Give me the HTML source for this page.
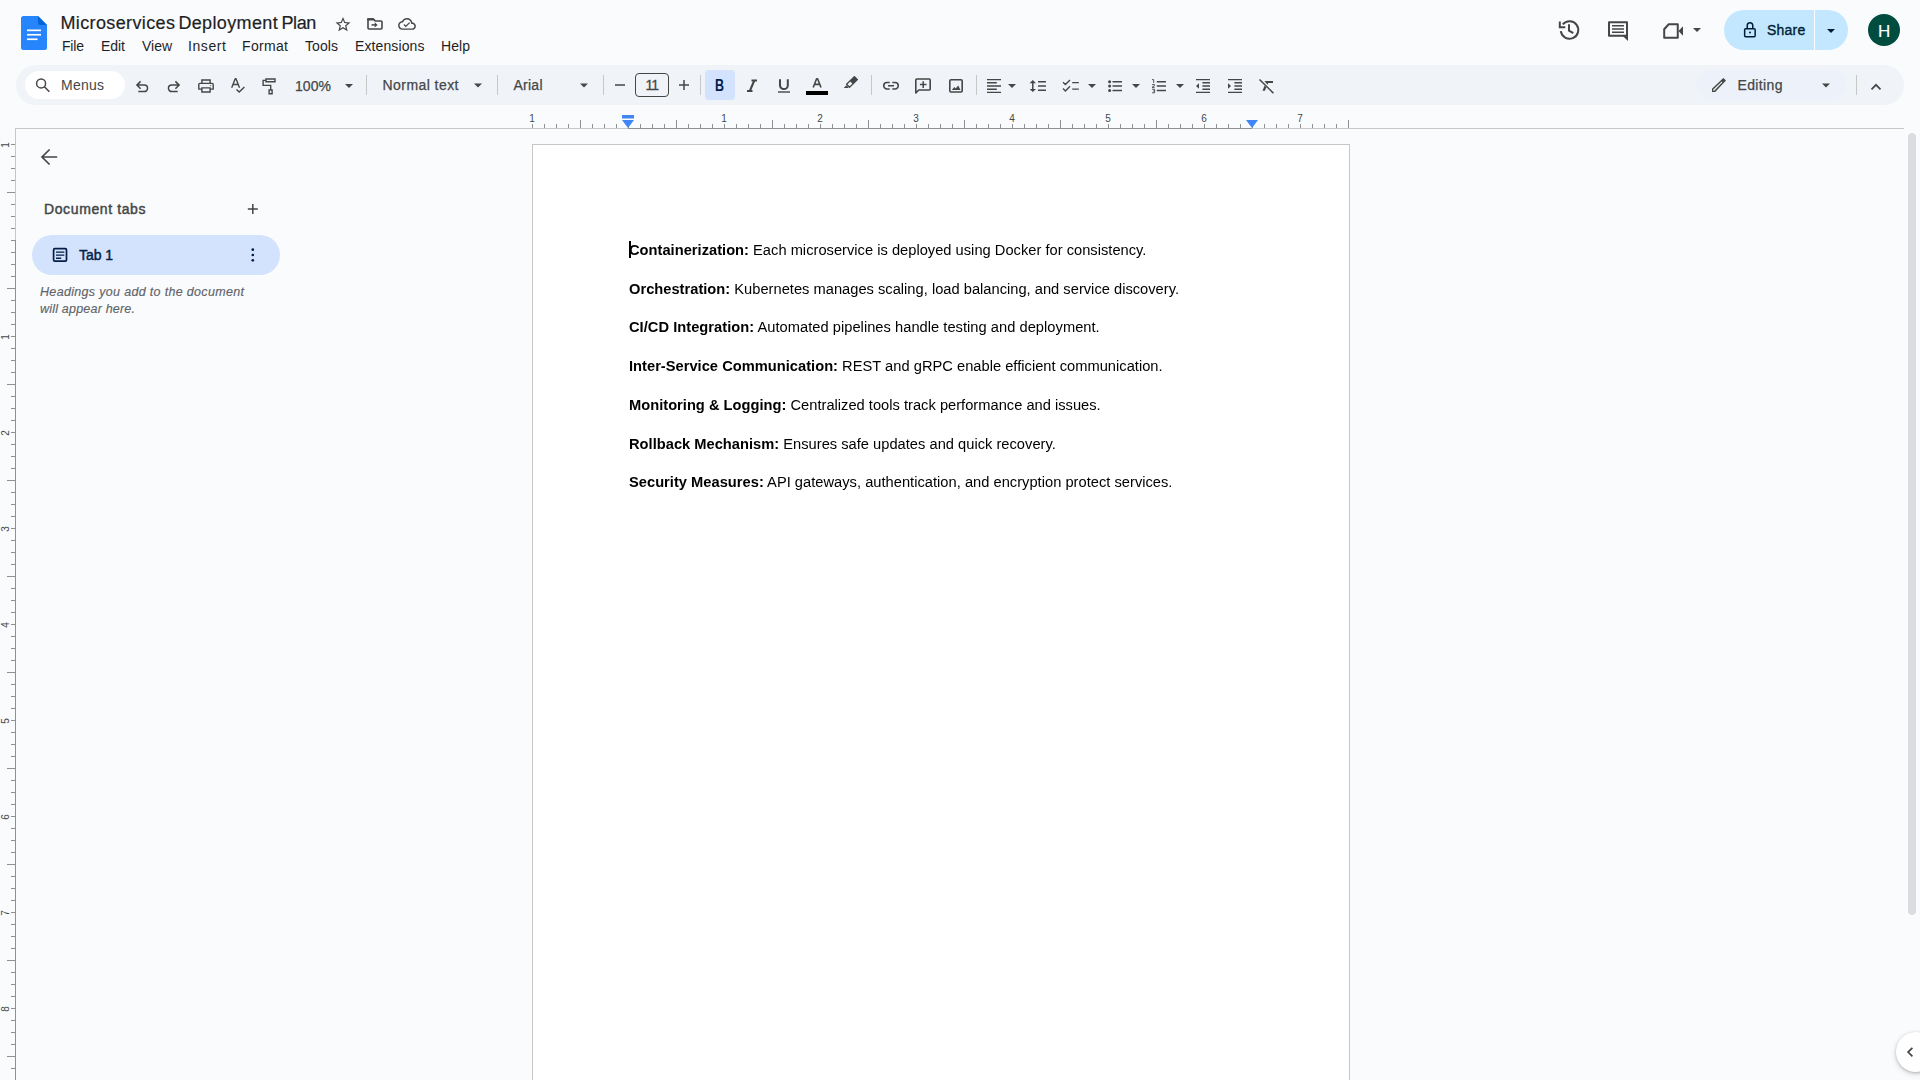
<!DOCTYPE html>
<html lang="en"><head><meta charset="utf-8"><title>Microservices Deployment Plan - Google Docs</title>
<style>
html,body{margin:0;padding:0;}
body{width:1920px;height:1080px;overflow:hidden;background:#f9fbfd;position:relative;font-family:"Liberation Sans",Arial,sans-serif;}
.t{position:absolute;white-space:pre;line-height:20px;}
.abs{position:absolute;}
svg{position:absolute;overflow:visible;}
.sep{position:absolute;width:1px;background:#c7c7c7;top:75px;height:20px;}
</style></head><body>

<svg style="left:21px;top:16px" width="26" height="34" viewBox="0 0 26 34">
<path d="M2.5 0H17L26 9V31.5A2.5 2.5 0 0 1 23.5 34H2.5A2.5 2.5 0 0 1 0 31.5V2.500A2.5 2.5 0 0 1 2.500 0Z" fill="#2684fc"/>
<path d="M17 0L26 9H19.500A2.500 2.500 0 0 1 17 6.500Z" fill="#0066da"/>
<rect x="6" y="13.500" width="14" height="1.700" fill="#fff"/><rect x="6" y="17.900" width="14" height="1.700" fill="#fff"/><rect x="6" y="22.400" width="10.500" height="1.700" fill="#fff"/>
</svg>
<span class="t" id="title" style="left:60.4px;top:12.76px;font-size:18px;font-weight:400;color:#1f1f1f;letter-spacing:0.382px;-webkit-text-stroke:0.2px;">Microservices</span>
<span class="t" id="title2" style="left:178.4px;top:12.76px;font-size:18px;font-weight:400;color:#1f1f1f;letter-spacing:0.361px;-webkit-text-stroke:0.2px;">Deployment</span>
<span class="t" id="title3" style="left:281.5px;top:12.76px;font-size:18px;font-weight:400;color:#1f1f1f;letter-spacing:-0.410px;-webkit-text-stroke:0.2px;">Plan</span>
<span class="t" id="m0" style="left:62px;top:36.15px;font-size:14px;font-weight:400;color:#1f1f1f;letter-spacing:-0.188px;">File</span>
<span class="t" id="m1" style="left:101px;top:36.15px;font-size:14px;font-weight:400;color:#1f1f1f;letter-spacing:-0.044px;">Edit</span>
<span class="t" id="m2" style="left:142px;top:36.15px;font-size:14px;font-weight:400;color:#1f1f1f;letter-spacing:-0.031px;">View</span>
<span class="t" id="m3" style="left:188px;top:36.15px;font-size:14px;font-weight:400;color:#1f1f1f;letter-spacing:0.595px;">Insert</span>
<span class="t" id="m4" style="left:242px;top:36.15px;font-size:14px;font-weight:400;color:#1f1f1f;letter-spacing:0.333px;">Format</span>
<span class="t" id="m5" style="left:305px;top:36.15px;font-size:14px;font-weight:400;color:#1f1f1f;letter-spacing:0.078px;">Tools</span>
<span class="t" id="m6" style="left:355px;top:36.15px;font-size:14px;font-weight:400;color:#1f1f1f;letter-spacing:0.112px;">Extensions</span>
<span class="t" id="m7" style="left:441px;top:36.15px;font-size:14px;font-weight:400;color:#1f1f1f;letter-spacing:0.066px;">Help</span>
<div class="abs" style="left:16px;top:65px;width:1888px;height:40px;border-radius:20px;background:#f0f4f9"></div>
<div class="abs" style="left:25px;top:71px;width:100px;height:28px;border-radius:14px;background:#fff"></div>
<span class="t" id="menus" style="left:61px;top:75.15px;font-size:14px;font-weight:400;color:#444746;letter-spacing:0.241px;">Menus</span>
<div class="sep" style="left:366px"></div>
<div class="sep" style="left:497px"></div>
<div class="sep" style="left:603px"></div>
<div class="sep" style="left:700px"></div>
<div class="sep" style="left:871px"></div>
<div class="sep" style="left:976px"></div>
<div class="sep" style="left:1856px"></div>
<span class="t" id="zoom" style="left:295px;top:75.65px;font-size:14px;font-weight:400;color:#444746;letter-spacing:0.062px;-webkit-text-stroke:0.25px;">100%</span>
<span class="t" id="ntext" style="left:382.5px;top:75.15px;font-size:14px;font-weight:400;color:#444746;letter-spacing:0.442px;-webkit-text-stroke:0.25px;">Normal text</span>
<span class="t" id="arial" style="left:513.5px;top:75.15px;font-size:14px;font-weight:400;color:#444746;letter-spacing:0.247px;-webkit-text-stroke:0.25px;">Arial</span>
<div class="abs" style="left:635px;top:73px;width:32px;height:22px;border:1px solid #444746;border-radius:4px"></div>
<span class="t" id="fs11" style="left:645.4px;top:75.15px;font-size:14px;font-weight:400;color:#444746;letter-spacing:-1.547px;letter-spacing:-0.9px;-webkit-text-stroke:0.3px;">11</span>
<div class="abs" style="left:705px;top:70px;width:30px;height:30px;border-radius:4px;background:#d3e3fd"></div>
<div class="abs" style="left:1696px;top:70px;width:151px;height:30px;border-radius:15px;background:#edf2fa"></div>
<span class="t" id="editing" style="left:1737.5px;top:75.15px;font-size:14px;font-weight:400;color:#444746;letter-spacing:0.364px;-webkit-text-stroke:0.25px;">Editing</span>
<div class="abs" style="left:1724px;top:10px;width:124px;height:40px;border-radius:20px;background:#c2e7ff"></div>
<div class="abs" style="left:1814px;top:10px;width:1px;height:40px;background:#f9fbfd"></div>
<span class="t" id="share" style="left:1767px;top:19.85px;font-size:14px;font-weight:400;color:#001d35;letter-spacing:0.232px;-webkit-text-stroke:0.35px #001d35;">Share</span>
<div class="abs" style="left:1868px;top:14px;width:32px;height:32px;border-radius:16px;background:#004d40"></div>
<span class="t" id="avH" style="left:1878px;top:21.71px;font-size:17px;font-weight:400;color:#fff;letter-spacing:0.000px;-webkit-text-stroke:0.15px;">H</span>
<span class="t" id="boldB" style="left:715px;top:75.66px;font-size:16px;font-weight:700;color:#041e49;letter-spacing:0.000px;transform:scaleX(0.78);transform-origin:0 50%;">B</span>
<div class="abs" style="left:16px;top:128px;width:1888px;height:1px;background:#c7c7c7"></div>
<div class="abs" style="left:15px;top:128px;width:1px;height:952px;background:#c7c7c7"></div>
<div class="abs" style="left:532px;top:144px;width:816px;height:940px;background:#fff;border:1px solid #c7c7c7"></div>
<div class="abs" style="left:1908px;top:133px;width:8px;height:782px;border-radius:4px;background:#dadce0"></div>
<div class="abs" style="left:1896px;top:1032px;width:40px;height:40px;border-radius:20px;background:#fff;box-shadow:0 1px 3px rgba(60,64,67,.3),0 2px 6px rgba(60,64,67,.15)"></div>
<span class="t" id="dtabs" style="left:44px;top:199.15px;font-size:14px;font-weight:400;color:#444746;letter-spacing:0.611px;-webkit-text-stroke:0.45px;">Document tabs</span>
<div class="abs" style="left:32px;top:235px;width:248px;height:40px;border-radius:20px;background:#d3e3fd"></div>
<span class="t" id="tab1" style="left:79px;top:245.15px;font-size:14px;font-weight:400;color:#041e49;letter-spacing:-0.063px;-webkit-text-stroke:0.45px;">Tab 1</span>
<span class="t" id="hd1" style="left:40px;top:281.67px;font-size:12.5px;font-weight:400;color:#5f6368;letter-spacing:0.326px;font-style:italic;-webkit-text-stroke:0.15px;">Headings you add to the document</span>
<span class="t" id="hd2" style="left:40px;top:298.67px;font-size:12.5px;font-weight:400;color:#5f6368;letter-spacing:0.205px;font-style:italic;-webkit-text-stroke:0.15px;">will appear here.</span>
<svg style="left:0;top:0" width="1920" height="1080" viewBox="0 0 1920 1080" shape-rendering="crispEdges">
<rect x="628" y="128" width="624" height="1" fill="#8e918f"/>
<rect x="532" y="124" width="1" height="4" fill="#8e918f"/>
<rect x="544" y="124" width="1" height="4" fill="#8e918f"/>
<rect x="556" y="124" width="1" height="4" fill="#8e918f"/>
<rect x="568" y="124" width="1" height="4" fill="#8e918f"/>
<rect x="580" y="120" width="1" height="8" fill="#8e918f"/>
<rect x="592" y="124" width="1" height="4" fill="#8e918f"/>
<rect x="604" y="124" width="1" height="4" fill="#8e918f"/>
<rect x="616" y="124" width="1" height="4" fill="#8e918f"/>
<rect x="628" y="124" width="1" height="4" fill="#8e918f"/>
<rect x="640" y="124" width="1" height="4" fill="#8e918f"/>
<rect x="652" y="124" width="1" height="4" fill="#8e918f"/>
<rect x="664" y="124" width="1" height="4" fill="#8e918f"/>
<rect x="676" y="120" width="1" height="8" fill="#8e918f"/>
<rect x="688" y="124" width="1" height="4" fill="#8e918f"/>
<rect x="700" y="124" width="1" height="4" fill="#8e918f"/>
<rect x="712" y="124" width="1" height="4" fill="#8e918f"/>
<rect x="724" y="124" width="1" height="4" fill="#8e918f"/>
<rect x="736" y="124" width="1" height="4" fill="#8e918f"/>
<rect x="748" y="124" width="1" height="4" fill="#8e918f"/>
<rect x="760" y="124" width="1" height="4" fill="#8e918f"/>
<rect x="772" y="120" width="1" height="8" fill="#8e918f"/>
<rect x="784" y="124" width="1" height="4" fill="#8e918f"/>
<rect x="796" y="124" width="1" height="4" fill="#8e918f"/>
<rect x="808" y="124" width="1" height="4" fill="#8e918f"/>
<rect x="820" y="124" width="1" height="4" fill="#8e918f"/>
<rect x="832" y="124" width="1" height="4" fill="#8e918f"/>
<rect x="844" y="124" width="1" height="4" fill="#8e918f"/>
<rect x="856" y="124" width="1" height="4" fill="#8e918f"/>
<rect x="868" y="120" width="1" height="8" fill="#8e918f"/>
<rect x="880" y="124" width="1" height="4" fill="#8e918f"/>
<rect x="892" y="124" width="1" height="4" fill="#8e918f"/>
<rect x="904" y="124" width="1" height="4" fill="#8e918f"/>
<rect x="916" y="124" width="1" height="4" fill="#8e918f"/>
<rect x="928" y="124" width="1" height="4" fill="#8e918f"/>
<rect x="940" y="124" width="1" height="4" fill="#8e918f"/>
<rect x="952" y="124" width="1" height="4" fill="#8e918f"/>
<rect x="964" y="120" width="1" height="8" fill="#8e918f"/>
<rect x="976" y="124" width="1" height="4" fill="#8e918f"/>
<rect x="988" y="124" width="1" height="4" fill="#8e918f"/>
<rect x="1000" y="124" width="1" height="4" fill="#8e918f"/>
<rect x="1012" y="124" width="1" height="4" fill="#8e918f"/>
<rect x="1024" y="124" width="1" height="4" fill="#8e918f"/>
<rect x="1036" y="124" width="1" height="4" fill="#8e918f"/>
<rect x="1048" y="124" width="1" height="4" fill="#8e918f"/>
<rect x="1060" y="120" width="1" height="8" fill="#8e918f"/>
<rect x="1072" y="124" width="1" height="4" fill="#8e918f"/>
<rect x="1084" y="124" width="1" height="4" fill="#8e918f"/>
<rect x="1096" y="124" width="1" height="4" fill="#8e918f"/>
<rect x="1108" y="124" width="1" height="4" fill="#8e918f"/>
<rect x="1120" y="124" width="1" height="4" fill="#8e918f"/>
<rect x="1132" y="124" width="1" height="4" fill="#8e918f"/>
<rect x="1144" y="124" width="1" height="4" fill="#8e918f"/>
<rect x="1156" y="120" width="1" height="8" fill="#8e918f"/>
<rect x="1168" y="124" width="1" height="4" fill="#8e918f"/>
<rect x="1180" y="124" width="1" height="4" fill="#8e918f"/>
<rect x="1192" y="124" width="1" height="4" fill="#8e918f"/>
<rect x="1204" y="124" width="1" height="4" fill="#8e918f"/>
<rect x="1216" y="124" width="1" height="4" fill="#8e918f"/>
<rect x="1228" y="124" width="1" height="4" fill="#8e918f"/>
<rect x="1240" y="124" width="1" height="4" fill="#8e918f"/>
<rect x="1252" y="120" width="1" height="8" fill="#8e918f"/>
<rect x="1264" y="124" width="1" height="4" fill="#8e918f"/>
<rect x="1276" y="124" width="1" height="4" fill="#8e918f"/>
<rect x="1288" y="124" width="1" height="4" fill="#8e918f"/>
<rect x="1300" y="124" width="1" height="4" fill="#8e918f"/>
<rect x="1312" y="124" width="1" height="4" fill="#8e918f"/>
<rect x="1324" y="124" width="1" height="4" fill="#8e918f"/>
<rect x="1336" y="124" width="1" height="4" fill="#8e918f"/>
<rect x="1348" y="120" width="1" height="8" fill="#8e918f"/>
<rect x="15" y="240" width="1" height="840" fill="#8e918f"/>
<rect x="11" y="144" width="4" height="1" fill="#8e918f"/>
<rect x="11" y="156" width="4" height="1" fill="#8e918f"/>
<rect x="11" y="168" width="4" height="1" fill="#8e918f"/>
<rect x="11" y="180" width="4" height="1" fill="#8e918f"/>
<rect x="7" y="192" width="8" height="1" fill="#8e918f"/>
<rect x="11" y="204" width="4" height="1" fill="#8e918f"/>
<rect x="11" y="216" width="4" height="1" fill="#8e918f"/>
<rect x="11" y="228" width="4" height="1" fill="#8e918f"/>
<rect x="11" y="240" width="4" height="1" fill="#8e918f"/>
<rect x="11" y="252" width="4" height="1" fill="#8e918f"/>
<rect x="11" y="264" width="4" height="1" fill="#8e918f"/>
<rect x="11" y="276" width="4" height="1" fill="#8e918f"/>
<rect x="7" y="288" width="8" height="1" fill="#8e918f"/>
<rect x="11" y="300" width="4" height="1" fill="#8e918f"/>
<rect x="11" y="312" width="4" height="1" fill="#8e918f"/>
<rect x="11" y="324" width="4" height="1" fill="#8e918f"/>
<rect x="11" y="336" width="4" height="1" fill="#8e918f"/>
<rect x="11" y="348" width="4" height="1" fill="#8e918f"/>
<rect x="11" y="360" width="4" height="1" fill="#8e918f"/>
<rect x="11" y="372" width="4" height="1" fill="#8e918f"/>
<rect x="7" y="384" width="8" height="1" fill="#8e918f"/>
<rect x="11" y="396" width="4" height="1" fill="#8e918f"/>
<rect x="11" y="408" width="4" height="1" fill="#8e918f"/>
<rect x="11" y="420" width="4" height="1" fill="#8e918f"/>
<rect x="11" y="432" width="4" height="1" fill="#8e918f"/>
<rect x="11" y="444" width="4" height="1" fill="#8e918f"/>
<rect x="11" y="456" width="4" height="1" fill="#8e918f"/>
<rect x="11" y="468" width="4" height="1" fill="#8e918f"/>
<rect x="7" y="480" width="8" height="1" fill="#8e918f"/>
<rect x="11" y="492" width="4" height="1" fill="#8e918f"/>
<rect x="11" y="504" width="4" height="1" fill="#8e918f"/>
<rect x="11" y="516" width="4" height="1" fill="#8e918f"/>
<rect x="11" y="528" width="4" height="1" fill="#8e918f"/>
<rect x="11" y="540" width="4" height="1" fill="#8e918f"/>
<rect x="11" y="552" width="4" height="1" fill="#8e918f"/>
<rect x="11" y="564" width="4" height="1" fill="#8e918f"/>
<rect x="7" y="576" width="8" height="1" fill="#8e918f"/>
<rect x="11" y="588" width="4" height="1" fill="#8e918f"/>
<rect x="11" y="600" width="4" height="1" fill="#8e918f"/>
<rect x="11" y="612" width="4" height="1" fill="#8e918f"/>
<rect x="11" y="624" width="4" height="1" fill="#8e918f"/>
<rect x="11" y="636" width="4" height="1" fill="#8e918f"/>
<rect x="11" y="648" width="4" height="1" fill="#8e918f"/>
<rect x="11" y="660" width="4" height="1" fill="#8e918f"/>
<rect x="7" y="672" width="8" height="1" fill="#8e918f"/>
<rect x="11" y="684" width="4" height="1" fill="#8e918f"/>
<rect x="11" y="696" width="4" height="1" fill="#8e918f"/>
<rect x="11" y="708" width="4" height="1" fill="#8e918f"/>
<rect x="11" y="720" width="4" height="1" fill="#8e918f"/>
<rect x="11" y="732" width="4" height="1" fill="#8e918f"/>
<rect x="11" y="744" width="4" height="1" fill="#8e918f"/>
<rect x="11" y="756" width="4" height="1" fill="#8e918f"/>
<rect x="7" y="768" width="8" height="1" fill="#8e918f"/>
<rect x="11" y="780" width="4" height="1" fill="#8e918f"/>
<rect x="11" y="792" width="4" height="1" fill="#8e918f"/>
<rect x="11" y="804" width="4" height="1" fill="#8e918f"/>
<rect x="11" y="816" width="4" height="1" fill="#8e918f"/>
<rect x="11" y="828" width="4" height="1" fill="#8e918f"/>
<rect x="11" y="840" width="4" height="1" fill="#8e918f"/>
<rect x="11" y="852" width="4" height="1" fill="#8e918f"/>
<rect x="7" y="864" width="8" height="1" fill="#8e918f"/>
<rect x="11" y="876" width="4" height="1" fill="#8e918f"/>
<rect x="11" y="888" width="4" height="1" fill="#8e918f"/>
<rect x="11" y="900" width="4" height="1" fill="#8e918f"/>
<rect x="11" y="912" width="4" height="1" fill="#8e918f"/>
<rect x="11" y="924" width="4" height="1" fill="#8e918f"/>
<rect x="11" y="936" width="4" height="1" fill="#8e918f"/>
<rect x="11" y="948" width="4" height="1" fill="#8e918f"/>
<rect x="7" y="960" width="8" height="1" fill="#8e918f"/>
<rect x="11" y="972" width="4" height="1" fill="#8e918f"/>
<rect x="11" y="984" width="4" height="1" fill="#8e918f"/>
<rect x="11" y="996" width="4" height="1" fill="#8e918f"/>
<rect x="11" y="1008" width="4" height="1" fill="#8e918f"/>
<rect x="11" y="1020" width="4" height="1" fill="#8e918f"/>
<rect x="11" y="1032" width="4" height="1" fill="#8e918f"/>
<rect x="11" y="1044" width="4" height="1" fill="#8e918f"/>
<rect x="7" y="1056" width="8" height="1" fill="#8e918f"/>
<rect x="11" y="1068" width="4" height="1" fill="#8e918f"/>
<rect x="11" y="1080" width="4" height="1" fill="#8e918f"/>
</svg>
<span class="t" style="left:522px;width:20px;text-align:center;top:108.5px;font-size:10px;color:#444746;">1</span>
<span class="t" style="left:714px;width:20px;text-align:center;top:108.5px;font-size:10px;color:#444746;">1</span>
<span class="t" style="left:810px;width:20px;text-align:center;top:108.5px;font-size:10px;color:#444746;">2</span>
<span class="t" style="left:906px;width:20px;text-align:center;top:108.5px;font-size:10px;color:#444746;">3</span>
<span class="t" style="left:1002px;width:20px;text-align:center;top:108.5px;font-size:10px;color:#444746;">4</span>
<span class="t" style="left:1098px;width:20px;text-align:center;top:108.5px;font-size:10px;color:#444746;">5</span>
<span class="t" style="left:1194px;width:20px;text-align:center;top:108.5px;font-size:10px;color:#444746;">6</span>
<span class="t" style="left:1290px;width:20px;text-align:center;top:108.5px;font-size:10px;color:#444746;">7</span>
<span class="t" style="left:-4px;width:20px;height:20px;text-align:center;top:135px;font-size:10px;color:#444746;transform:rotate(-90deg);">1</span>
<span class="t" style="left:-4px;width:20px;height:20px;text-align:center;top:327px;font-size:10px;color:#444746;transform:rotate(-90deg);">1</span>
<span class="t" style="left:-4px;width:20px;height:20px;text-align:center;top:423px;font-size:10px;color:#444746;transform:rotate(-90deg);">2</span>
<span class="t" style="left:-4px;width:20px;height:20px;text-align:center;top:519px;font-size:10px;color:#444746;transform:rotate(-90deg);">3</span>
<span class="t" style="left:-4px;width:20px;height:20px;text-align:center;top:615px;font-size:10px;color:#444746;transform:rotate(-90deg);">4</span>
<span class="t" style="left:-4px;width:20px;height:20px;text-align:center;top:711px;font-size:10px;color:#444746;transform:rotate(-90deg);">5</span>
<span class="t" style="left:-4px;width:20px;height:20px;text-align:center;top:807px;font-size:10px;color:#444746;transform:rotate(-90deg);">6</span>
<span class="t" style="left:-4px;width:20px;height:20px;text-align:center;top:903px;font-size:10px;color:#444746;transform:rotate(-90deg);">7</span>
<span class="t" style="left:-4px;width:20px;height:20px;text-align:center;top:999px;font-size:10px;color:#444746;transform:rotate(-90deg);">8</span>
<svg style="left:0;top:0" width="1920" height="1080" viewBox="0 0 1920 1080"><rect x="622" y="115" width="12" height="3.500" fill="#4285f4"/><path d="M622 120H634L628 128Z" fill="#4285f4"/><path d="M1246 120H1258L1252 128Z" fill="#4285f4"/></svg>
<svg style="left:0;top:0" width="1920" height="1080" viewBox="0 0 1920 1080" fill="none" stroke="#444746" stroke-width="1.5" stroke-linecap="butt" stroke-linejoin="miter">
<!-- title icons -->
<g transform="translate(334 15.500) scale(0.750)" fill="#444746" stroke="none"><path d="M22 9.240l-7.190-.620L12 2 9.190 8.630 2 9.240l5.460 4.730L5.820 21 12 17.270 18.180 21l-1.630-7.030L22 9.240zM12 15.400l-3.760 2.270 1-4.280-3.320-2.880 4.380-.380L12 6.100l1.710 4.040 4.380.380-3.320 2.880 1 4.280L12 15.400z"/></g>
<g><path d="M368 19H373.300L375.300 21H381A1 1 0 0 1 382 22V28A1 1 0 0 1 381 29H369A1 1 0 0 1 368 28Z" stroke-width="1.600" stroke-linejoin="round"/><path d="M367.300 18.300H373.600L375.600 20.600H367.300Z" fill="#444746" stroke="none"/><path d="M371.500 24.900H375.500" stroke-width="1.500"/><path d="M374.700 22.300L377.600 24.900L374.700 27.500Z" fill="#444746" stroke="none"/></g>
<g transform="translate(398.100 15.030) scale(0.742)" fill="#444746" stroke="none"><path d="M19.350 10.040C18.670 6.590 15.640 4 12 4 9.110 4 6.600 5.640 5.350 8.040 2.340 8.360 0 10.910 0 14c0 3.310 2.690 6 6 6h13c2.760 0 5-2.240 5-5 0-2.640-2.050-4.780-4.650-4.960zM19 18H6c-2.210 0-4-1.790-4-4 0-2.050 1.530-3.760 3.560-3.970l1.070-.110.500-.950C8.080 7.140 9.940 6 12 6c2.620 0 4.880 1.860 5.390 4.430l.300 1.500 1.530.110c1.560.100 2.780 1.410 2.780 2.960 0 1.650-1.350 3-3 3z"/><path d="M10.400 16.500l-3.100-3.100 1.200-1.200 1.900 1.900 4.500-4.500 1.200 1.200z"/></g>

<!-- header right -->
<g stroke-width="2">
<path d="M1560.800 31.200A8.800 8.800 0 1 0 1562.760 24.340"/><path d="M1559.800 21.500V27.200H1565.300"/><path d="M1569 24.200V30.600L1573.300 33.200"/>
<path d="M1609 22.250H1627V35.700H1609Z" stroke-linejoin="round"/><path d="M1622.500 35.700H1628V40.900Z" fill="#444746" stroke="none"/>
<path d="M1612 25.800H1624M1612 29H1624M1612 32.200H1624" stroke-width="1.600"/>
<path d="M1664.200 37.750V29.200L1668.700 24.300H1677.750V37.750Z" stroke-linejoin="round"/><path d="M1678.500 31L1683 26.200V35.800Z" fill="#444746" stroke="none"/>
</g>
<path d="M1693 28H1701L1697 32Z" fill="#444746" stroke="none"/>
<!-- share lock -->
<g stroke="#001d35"><rect x="1744.650" y="28.750" width="10.500" height="7.900" rx="1"/><path d="M1747.250 28.500V25.600A2.750 2.750 0 0 1 1752.750 25.600V28.500"/><circle cx="1750" cy="32.600" r="1" fill="#001d35" stroke="none"/></g>
<path d="M1827 29H1835L1831 33Z" fill="#001d35" stroke="none"/>

<!-- toolbar: search -->
<circle cx="41.100" cy="83.400" r="4.500"/><path d="M44.400 86.700L49.400 91.700"/>
<!-- undo / redo -->
<path d="M140.600 81.400L136.900 85.100L140.600 88.800M137 85.100H144.300A3.250 3.250 0 0 1 144.300 91.600H138.300"/>
<path d="M175.400 81.400L179.100 85.100L175.400 88.800M179 85.100H171.700A3.250 3.250 0 0 0 171.700 91.600H177.700"/>
<!-- print -->
<path d="M201.900 83.400V80H210.100V83.400M201.900 89.100H198.800V84.400A1 1 0 0 1 199.800 83.400H212.200A1 1 0 0 1 213.200 84.400V89.100H210.100M201.900 87.900H210.100V92H201.900Z" stroke-width="1.400"/><circle cx="210.700" cy="85.600" r="0.600" fill="#444746" stroke="none"/>
<!-- spellcheck -->
<path d="M231.700 87.800L235.200 78.700H236L239.500 87.800M233.100 84.500H238.100" stroke-width="1.400" stroke-linejoin="bevel"/><path d="M236.500 89.400L239.200 92.100L244.400 86.900" stroke-width="1.400"/>
<!-- paint format -->
<path d="M266 79H275V81.800H266ZM266 80.400H263.100V85.400H270.700V89.500M269.100 90H272.100V93.800H269.100Z" stroke-width="1.400"/>
<!-- dropdown arrows -->
<g fill="#444746" stroke="none">
<path d="M345 84H353L349 88Z"/><path d="M474 83.500H482L478 87.500Z"/><path d="M580 83.500H588L584 87.500Z"/>
<path d="M1008 84H1016L1012 88Z"/><path d="M1088 84H1096L1092 88Z"/><path d="M1132 84H1140L1136 88Z"/><path d="M1176 84H1184L1180 88Z"/>
<path d="M1822 83.500H1830L1826 87.500Z"/>
</g>
<!-- minus plus -->
<path d="M615 85H625M679 85H689M684 80V90" stroke-width="1.500"/>
<!-- I U A -->
<path d="M751.500 80.500H757M747 91H752.500M754.300 80.500L749.800 91" stroke-width="2"/>
<path d="M780 79.300V85.200A3.900 3.900 0 0 0 787.800 85.200V79.300" stroke-width="2"/><path d="M778 92H790" stroke-width="1.400"/>
<path d="M813.200 87.500L816.600 78.700H817.600L821 87.500M814.500 84.400H819.700" stroke-width="1.600" stroke-linejoin="bevel"/><rect x="806" y="91" width="22" height="4" fill="#000" stroke="none"/>
<!-- highlighter -->
<path d="M854.400 76.600L857.400 79.600L849.550 87.200L846.600 84.200Z" stroke-width="1.300" stroke-linejoin="round"/>
<g fill="#444746" stroke="none"><path d="M854.400 76.300L857.700 79.600L853 84.200L849.700 80.900Z"/><path d="M846.300 85.300L848.600 87.500L848 88H843.800Z"/></g>
<!-- link -->
<path d="M889.700 82.500H887A3.250 3.250 0 0 0 887 89H889.700M892.300 82.500H895A3.250 3.250 0 0 1 895 89H892.300M888 85.750H894" stroke-width="1.600"/>
<!-- add comment -->
<path d="M915.800 93V80A1 1 0 0 1 916.800 79H929.200A1 1 0 0 1 930.200 80V89A1 1 0 0 1 929.200 90H918.800Z" stroke-width="1.600" stroke-linejoin="round"/><path d="M919.900 84.600H926.500M923.200 81.300V87.900" stroke-width="1.500"/>
<!-- image -->
<rect x="949.800" y="79.800" width="12.400" height="12.200" rx="1.200" stroke-width="1.600"/><path d="M951.800 89.900L954.300 87L955.700 88.600L958.200 85.600L960.500 89.900Z" fill="#444746" stroke="none"/>
<!-- align -->
<path d="M987 79.600H1001M987 82.800H996.800M987 86H1001M987 89.200H996.800M987 92.400H1001" stroke-width="1.400"/>
<!-- line spacing -->
<path d="M1032.800 81V91" stroke-width="1.500"/><path d="M1029.600 83.200L1032.800 80L1036 83.200ZM1029.600 88.900L1032.800 92.100L1036 88.900Z" fill="#444746" stroke="none"/><path d="M1038 81.700H1046M1038 86H1046M1038 90.300H1046" stroke-width="1.500"/>
<!-- checklist -->
<path d="M1063 82.200L1065.400 84.500L1070 79.900M1063 88.600L1065.400 90.900L1070 86.300M1072.200 82.600H1078.800M1072.200 89.100H1078.800" stroke-width="1.400"/>
<!-- bullets -->
<g fill="#444746" stroke="none"><circle cx="1109.600" cy="81.700" r="1.500"/><circle cx="1109.600" cy="86.100" r="1.500"/><circle cx="1109.600" cy="90.400" r="1.500"/></g>
<path d="M1112.500 81.700H1122M1112.500 86.100H1122M1112.500 90.400H1122" stroke-width="1.500"/>
<!-- numbered -->
<path d="M1156.800 81.700H1166M1156.800 86.100H1166M1156.800 90.400H1166" stroke-width="1.500"/>
<path d="M1152 79.600H1153.700V83M1152 84.600H1154.600V85.600L1152 87.400H1154.600M1152 89.200H1154.600V92.800H1152M1153 91H1154.600" stroke-width="0.900"/>
<!-- indents -->
<path d="M1196 79.600H1210M1202.400 82.800H1210M1202.400 86H1210M1202.400 89.200H1210M1196 92.400H1210" stroke-width="1.400"/><path d="M1199 83.300L1196 86L1199 88.700Z" fill="#444746" stroke="none"/>
<path d="M1228 79.600H1242M1234.400 82.800H1242M1234.400 86H1242M1234.400 89.200H1242M1228 92.400H1242" stroke-width="1.400"/><path d="M1228 83.300L1231 86L1228 88.700Z" fill="#444746" stroke="none"/>
<!-- clear formatting -->
<path d="M1259.500 79.500L1273.500 93.300" stroke-width="1.500"/><g fill="#444746" stroke="none"><path d="M1264.400 81.100H1273V82.900H1268.200L1267.600 84.700Z"/><path d="M1264.500 85.700L1266.400 87.300L1264.900 90.800H1262.500Z"/></g>
<!-- editing pencil -->
<path fill-rule="evenodd" fill="#444746" stroke="none" d="M1712 88.700L1723.300 77.900L1726 80.600L1715.200 92H1712ZM1713.300 89.400L1721.670 81.400L1722.400 82.150L1714.200 90.700H1713.300Z"/>
<!-- collapse chevron -->
<path d="M1871.500 89.300L1876 84.800L1880.500 89.300" stroke-width="1.700"/>
<!-- side toggle chevron -->
<path d="M1912.400 1047.800L1908.100 1052.100L1912.400 1056.400" stroke-width="1.700"/>

<!-- sidebar -->
<path d="M49.600 149.500L42 157L49.600 164.500M42.200 157H57.200" stroke-width="1.700"/>
<path d="M247.800 209H257.800M252.800 204V214" stroke-width="1.500"/>
<g stroke="#041e49"><rect x="53.600" y="248.700" width="12.900" height="12.400" rx="1.200" stroke-width="1.700"/><path d="M56 252.100H64.300M56 255.100H64.300M56 258.200H61.200" stroke-width="1.400"/></g>
<g fill="#041e49" stroke="none"><circle cx="252.800" cy="249.700" r="1.350"/><circle cx="252.800" cy="255" r="1.350"/><circle cx="252.800" cy="260.300" r="1.350"/></g>
</svg>

<div class="abs" style="left:0;top:0;width:1920px;height:1080px;will-change:transform">
<span class="t" id="dl0" style="left:629px;top:239.92px;font-size:14.6667px;font-weight:400;color:#000;letter-spacing:0.017px;"><b>Containerization:</b> Each microservice is deployed using Docker for consistency.</span>
<span class="t" id="dl1" style="left:629px;top:278.58px;font-size:14.6667px;font-weight:400;color:#000;letter-spacing:0.015px;"><b>Orchestration:</b> Kubernetes manages scaling, load balancing, and service discovery.</span>
<span class="t" id="dl2" style="left:629px;top:317.25px;font-size:14.6667px;font-weight:400;color:#000;letter-spacing:0.033px;"><b>CI/CD Integration:</b> Automated pipelines handle testing and deployment.</span>
<span class="t" id="dl3" style="left:629px;top:355.92px;font-size:14.6667px;font-weight:400;color:#000;letter-spacing:0.019px;"><b>Inter-Service Communication:</b> REST and gRPC enable efficient communication.</span>
<span class="t" id="dl4" style="left:629px;top:394.58px;font-size:14.6667px;font-weight:400;color:#000;letter-spacing:0.014px;"><b>Monitoring &amp; Logging:</b> Centralized tools track performance and issues.</span>
<span class="t" id="dl5" style="left:629px;top:434.25px;font-size:14.6667px;font-weight:400;color:#000;letter-spacing:0.017px;"><b>Rollback Mechanism:</b> Ensures safe updates and quick recovery.</span>
<span class="t" id="dl6" style="left:629px;top:471.92px;font-size:14.6667px;font-weight:400;color:#000;letter-spacing:0.021px;"><b>Security Measures:</b> API gateways, authentication, and encryption protect services.</span>
</div>
<div class="abs" style="left:629px;top:241px;width:2px;height:17px;background:#000"></div>
</body></html>
